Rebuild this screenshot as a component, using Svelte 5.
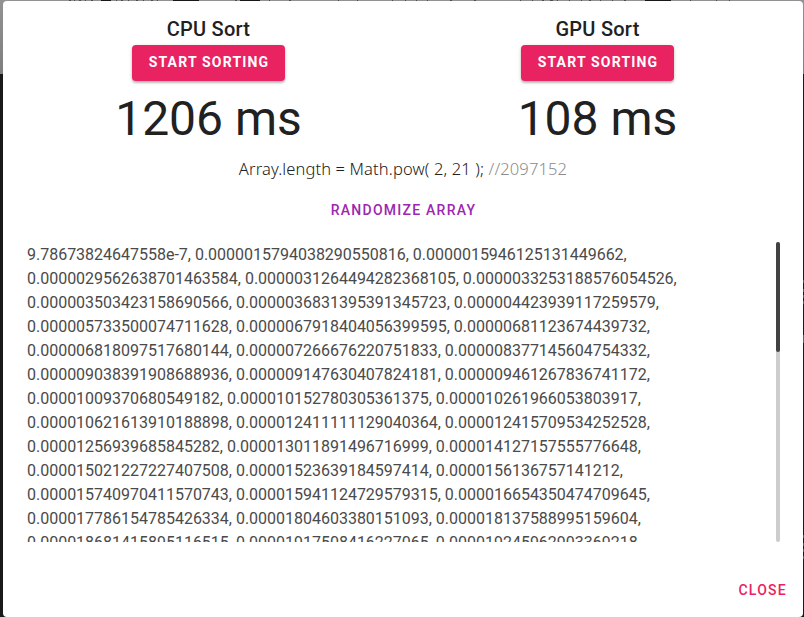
<script>
  const sorts = $state([
    { name: 'CPU Sort', time: 1206 },
    { name: 'GPU Sort', time: 108 }
  ]);
  const rows = [
    '9.78673824647558e-7, 0.0000015794038290550816, 0.0000015946125131449662,',
    '0.0000029562638701463584, 0.0000031264494282368105, 0.0000033253188576054526,',
    '0.000003503423158690566, 0.0000036831395391345723, 0.000004423939117259579,',
    '0.000005733500074711628, 0.0000067918404056399595, 0.00000681123674439732,',
    '0.000006818097517680144, 0.000007266676220751833, 0.000008377145604754332,',
    '0.000009038391908688936, 0.000009147630407824181, 0.000009461267836741172,',
    '0.00001009370680549182, 0.000010152780305361375, 0.000010261966053803917,',
    '0.000010621613910188898, 0.000012411111129040364, 0.000012415709534252528,',
    '0.00001256939685845282, 0.000013011891496716999, 0.000014127157555776648,',
    '0.000015021227227407508, 0.00001523639184597414, 0.0000156136757141212,',
    '0.000015740970411570743, 0.000015941124729579315, 0.000016654350474709645,',
    '0.000017786154785426334, 0.00001804603380151093, 0.000018137588995159604,',
    '0.000018681415895116515, 0.00001917508416227065, 0.000019245962903369218,'
  ];
  // Page heading strokes that remain visible above the dialog: [x, width]
  const strokes = [[69,2],[74,1],[79,2],[85,1],[91,2],[101,10],[116,1],[121,2],[128,1],[136,2],[143,1],[151,2],[157,1],[173,26],[235,2],[240,20],[269,1],[289,2],[338,1],[357,1],[392,1],[405,1],[416,1],[427,1],[450,2],[474,2],[520,1],[532,1],[542,2],[550,3],[557,1],[569,1],[581,1],[589,2],[600,1],[612,1],[624,2],[645,26],[690,1],[716,1],[729,1]];
</script>

<div class="backdrop">
  <svg class="header-strokes" width="804" height="1" shape-rendering="crispEdges">
    {#each strokes as [x, width]}
      <rect {x} y="0" {width} height="1" fill={width > 9 ? '#171717' : '#4c4c4c'} />
    {/each}
  </svg>
  <svg class="side-marks" width="1" height="617" shape-rendering="crispEdges">
    {#each [280, 289, 295, 301, 535, 543, 549, 556] as y}
      <rect x="0" {y} width="1" height="3" fill="#555" />
    {/each}
    <rect x="0" y="335" width="1" height="8" fill="#85512f" />
  </svg>

  <div class="dialog" role="dialog" aria-label="Sort">
    <div class="sorts">
      {#each sorts as sort}
        <section>
          <h6>{sort.name}</h6>
          <button class="contained">START SORTING</button>
          <div class="time">{sort.time} ms</div>
        </section>
      {/each}
    </div>
    <p class="formula"><span class="code">Array.length = Math.pow( 2, 21 ); <i>//2097152</i></span></p>
    <button class="text randomize">RANDOMIZE ARRAY</button>
    <div class="scroller">
      <div class="numbers">
        {#each rows as row}<div>{row}</div>{/each}
      </div>
      <div class="track"><div class="thumb"></div></div>
    </div>
    <footer><button class="text close">CLOSE</button></footer>
  </div>
</div>

<style>
  :global(body) { overflow: hidden; }
  .backdrop {
    position: relative;
    box-sizing: border-box;
    width: 804px;
    height: 617px;
    padding: 1px 1px 0 3px;
    background: linear-gradient(#929292, #7e7e7e 74px, #191919 74px);
    font-family: Roboto, sans-serif;
    color: #212121;
  }
  .header-strokes { position: absolute; left: 0; top: 0; }
  .side-marks { position: absolute; right: 0; top: 0; }
  .dialog {
    position: relative;
    box-sizing: border-box;
    display: flex;
    flex-direction: column;
    width: 800px;
    height: 616px;
    padding: 12px 11px 8px;
    border-radius: 4px;
    background: #fff;
  }
  .sorts { display: flex; }
  section {
    width: 50%;
    display: flex;
    flex-direction: column;
    align-items: center;
  }
  h6 {
    margin: 0;
    font-size: 20px;
    line-height: 32px;
    font-weight: 500;
    letter-spacing: 0.25px;
  }
  button {
    border: 0;
    background: none;
    font-family: inherit;
    font-size: 14px;
    font-weight: 500;
    letter-spacing: 1.25px;
    height: 36px;
    white-space: nowrap;
  }
  .contained {
    width: 153px;
    padding: 0 0 2px 1px;
    border-radius: 4px;
    background: #e92362;
    color: #fff;
    font-weight: 700;
    letter-spacing: 1.17px;
    box-shadow: 0 2px 2px rgba(0, 0, 0, .2), 0 1px 4px rgba(0, 0, 0, .14);
  }
  .time { font-size: 48px; line-height: 50px; margin-top: 13px; }
  .formula {
    margin: 13px 0 0;
    display: flex;
    justify-content: center;
    font: 300 16.5px/24px "Noto Sans", sans-serif;
    letter-spacing: 0.13px;
  }
  .code { white-space: nowrap; }
  .code i { font-style: normal; color: #8c8c8c; }
  .text { padding: 0 8px; }
  .randomize { align-self: center; margin: 11px 0 0 1px; color: #9c27b0; }
  .scroller {
    display: flex;
    justify-content: space-between;
    height: 300px;
    margin: 14px 12px 0 13px;
    overflow: hidden;
  }
  .numbers {
    padding-top: 1px;
    font-size: 16px;
    line-height: 24px;
    font-weight: 400;
    letter-spacing: -0.01px;
    color: #4a4a4a;
    white-space: nowrap;
  }
  .track { width: 4px; height: 300px; border-radius: 2px; background: #cdcdcd; }
  .thumb { height: 110px; border-radius: 2px; background: #424242; }
  footer { display: flex; justify-content: flex-end; margin-top: 30px; }
  .close { margin-right: -3px; color: #e92362; }
</style>
